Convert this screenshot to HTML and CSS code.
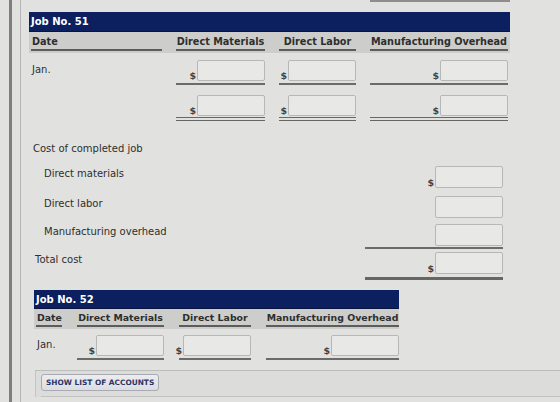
FILE: index.html
```html
<!DOCTYPE html>
<html lang="en">
  <head>
    <meta charset="UTF-8" />
    <title>Job Cost Sheets</title>
    <link rel="stylesheet" href="styles.css">
  </head>

  <body>
    <div class="screen">
      <div class="content">
        <div class="top-rule"></div>

        <!-- Job 51 -->
        <section class="job job-51">
          <div class="job-title">Job No. 51</div>
          <div class="job-row job-head">
            <div class="col-head date">Date</div>
            <div class="col-head">Direct Materials</div>
            <div class="col-head">Direct Labor</div>
            <div class="col-head">Manufacturing Overhead</div>
          </div>
          <div class="job-row">
            <div class="date-cell">Jan.</div>
            <div class="amount line"><span class="cur">$</span><input class="box" type="text"></div>
            <div class="amount line"><span class="cur">$</span><input class="box" type="text"></div>
            <div class="amount line"><span class="cur">$</span><input class="box" type="text"></div>
          </div>
          <div class="job-row row-total">
            <div class="date-cell"></div>
            <div class="amount double"><span class="cur">$</span><input class="box" type="text"></div>
            <div class="amount double"><span class="cur">$</span><input class="box" type="text"></div>
            <div class="amount double"><span class="cur">$</span><input class="box" type="text"></div>
          </div>
        </section>

        <!-- cost of completed job -->
        <section class="cost">
          <div class="cost-title">Cost of completed job</div>
          <div class="cost-line first">
            <div class="cost-label">Direct materials</div>
            <div class="cost-amount"><span class="cur">$</span><input class="box" type="text"></div>
          </div>
          <div class="cost-line">
            <div class="cost-label">Direct labor</div>
            <div class="cost-amount"><input class="box" type="text"></div>
          </div>
          <div class="cost-line tight">
            <div class="cost-label">Manufacturing overhead</div>
            <div class="cost-amount sum"><input class="box" type="text"></div>
          </div>
          <div class="cost-line tighter">
            <div class="cost-label total">Total cost</div>
            <div class="cost-amount grand"><span class="cur">$</span><input class="box" type="text"></div>
          </div>
        </section>

        <!-- Job 52 -->
        <section class="job job-52">
          <div class="job-title">Job No. 52</div>
          <div class="job-row job-head">
            <div class="col-head date">Date</div>
            <div class="col-head">Direct Materials</div>
            <div class="col-head">Direct Labor</div>
            <div class="col-head">Manufacturing Overhead</div>
          </div>
          <div class="job-row">
            <div class="date-cell">Jan.</div>
            <div class="amount line"><span class="cur">$</span><input class="box" type="text"></div>
            <div class="amount line"><span class="cur">$</span><input class="box" type="text"></div>
            <div class="amount line"><span class="cur">$</span><input class="box" type="text"></div>
          </div>
        </section>

        <div class="accounts">
          <div class="accounts-bar">
            <button class="btn" type="button">SHOW LIST OF ACCOUNTS</button>
          </div>
        </div>
      </div>
    </div>
  </body>
</html>
```

FILE: styles.css
```css
body {
  margin: 0;
  background: #e1e2e0;
  font-family: "DejaVu Sans", Verdana, sans-serif;
  font-size: 10px;
  line-height: 12px;
  color: #2e2e2e;
  overflow: hidden;
}

/* the two frame rules on the left */
.screen {
  margin-left: 9px;
  border-left: 3px solid #7e7f7d;
  padding-left: 8px;
  min-height: 402px;
}

.content {
  border-left: 1px solid #b6b7b5;
  padding-left: 8px;
  min-height: 402px;
}

.top-rule {
  margin-left: 341px;
  width: 140px;
  height: 2px;
  background: #8d8e8c;
}

/* job sheet */
.job-51 {
  width: 481px;
  margin-top: 10px;
}

.job-title {
  background: #0c2060;
  color: #fff;
  font-weight: bold;
  font-size: 10px;
  height: 20px;
  line-height: 20px;
  padding-left: 2px;
  border-bottom: 1px solid #08143d;
  box-sizing: border-box;
}

.job-row {
  display: grid;
  column-gap: 14px;
  padding-left: 2px;
}

.job-51 .job-row {
  grid-template-columns: 131px 89px 77px 138px;
}

.job-head {
  background: #cdcecc;
  padding-top: 4px;
  padding-bottom: 2px;
}

.col-head {
  font-weight: bold;
  font-size: 9.7px;
  text-align: center;
  white-space: nowrap;
  border-bottom: 2px solid #5c5d5b;
  padding-bottom: 1px;
}

.col-head.date {
  text-align: left;
  padding-left: 1px;
}

.date-cell {
  padding-top: 11px;
  padding-left: 1px;
}

.amount {
  display: flex;
  justify-content: flex-end;
  align-items: flex-end;
  gap: 1px;
  padding-top: 7px;
  padding-bottom: 2px;
}

.amount.line {
  border-bottom: 2px solid #6b6c6a;
}

.row-total .amount {
  padding-top: 10px;
}

.amount.double {
  border-bottom: 4px double #666765;
  padding-bottom: 1px;
}

.cur {
  font-weight: bold;
  font-size: 9.5px;
  line-height: 11px;
  color: #444;
}

.box {
  width: 68px;
  height: 21px;
  box-sizing: border-box;
  margin: 0;
  padding: 0 3px;
  border: 1px solid #b7b8b6;
  border-radius: 2px;
  background: #e8e9e7;
  font: inherit;
}

.cost-amount .box {
  height: 22px;
}

/* cost of completed job */
.cost {
  width: 481px;
  margin-top: 22px;
}

.cost-title {
  padding-left: 4px;
}

.cost-line {
  display: flex;
  justify-content: space-between;
  align-items: flex-start;
  padding-right: 7px;
  margin-top: 8px;
}

.cost-line.first {
  margin-top: 11px;
}

.cost-line.tight {
  margin-top: 6px;
}

.cost-line.tighter {
  margin-top: 3px;
}

.cost-label {
  padding-left: 15px;
  padding-top: 2px;
}

.cost-label.total {
  padding-left: 6px;
  padding-top: 2px;
}

.cost-amount {
  width: 138px;
  display: flex;
  justify-content: flex-end;
  align-items: flex-end;
  gap: 1px;
}

.cost-amount.sum {
  border-bottom: 2px solid #6b6c6a;
  padding-bottom: 1px;
}

.cost-amount.grand {
  border-bottom: 3px solid #666765;
  padding-bottom: 3px;
}

/* job 52 is narrower */
.job-52 {
  width: 365px;
  margin-top: 10px;
  margin-left: 5px;
}

.job-52 .job-title {
  height: 19px;
  line-height: 19px;
}

.job-52 .job-row {
  grid-template-columns: 26px 87px 72px 133px;
  column-gap: 15px;
}

.job-52 .job-head {
  padding-top: 3px;
  padding-bottom: 2px;
}

.job-52 .col-head {
  font-size: 9.4px;
}

.job-52 .date-cell {
  padding-top: 10px;
}

.job-52 .amount {
  padding-top: 6px;
}

/* accounts panel */
.accounts {
  margin-top: 10px;
  margin-left: 6px;
  border-top: 1px solid #bcbdbb;
  border-left: 1px solid #c4c5c3;
  background: #dcdddb;
  padding-left: 5px;
}

.accounts-bar {
  padding: 3px 0 5px;
  border-bottom: 1px solid #c2c3c1;
}

.btn {
  height: 17px;
  padding: 0 4px;
  border: 1px solid #a9abb4;
  border-radius: 3px;
  background: linear-gradient(#ededef, #dcdde1);
  color: #2b3566;
  font-family: "DejaVu Sans", Verdana, sans-serif;
  font-weight: bold;
  font-size: 7.4px;
  line-height: 15px;
}
```
